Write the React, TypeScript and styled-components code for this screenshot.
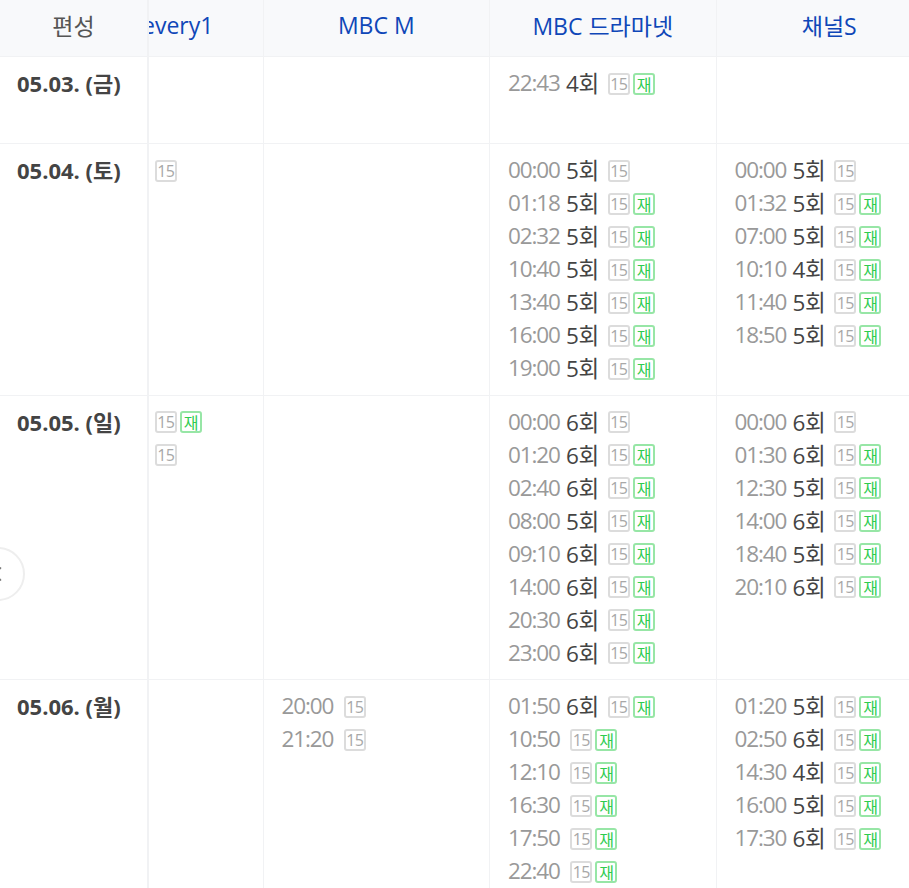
import React, { useLayoutEffect, useRef } from 'react';
import styled, { createGlobalStyle } from 'styled-components';

type Entry = { time: string; ep?: string; re?: boolean };
type Row = { date: string; cells: Entry[][] };

const channels = ['MBC every1', 'MBC M', 'MBC 드라마넷', '채널S'];

const e = (time: string, ep?: string, re = true): Entry => ({ time, ep, re });

const rows: Row[] = [
  {
    date: '05.03. (금)',
    cells: [[], [], [e('22:43', '4회')], []],
  },
  {
    date: '05.04. (토)',
    cells: [
      [e('23:50', '5회', false)],
      [],
      [
        e('00:00', '5회', false),
        e('01:18', '5회'),
        e('02:32', '5회'),
        e('10:40', '5회'),
        e('13:40', '5회'),
        e('16:00', '5회'),
        e('19:00', '5회'),
      ],
      [
        e('00:00', '5회', false),
        e('01:32', '5회'),
        e('07:00', '5회'),
        e('10:10', '4회'),
        e('11:40', '5회'),
        e('18:50', '5회'),
      ],
    ],
  },
  {
    date: '05.05. (일)',
    cells: [
      [e('16:20', '5회'), e('23:50', '6회', false)],
      [],
      [
        e('00:00', '6회', false),
        e('01:20', '6회'),
        e('02:40', '6회'),
        e('08:00', '5회'),
        e('09:10', '6회'),
        e('14:00', '6회'),
        e('20:30', '6회'),
        e('23:00', '6회'),
      ],
      [
        e('00:00', '6회', false),
        e('01:30', '6회'),
        e('12:30', '5회'),
        e('14:00', '6회'),
        e('18:40', '5회'),
        e('20:10', '6회'),
      ],
    ],
  },
  {
    date: '05.06. (월)',
    cells: [
      [],
      [e('20:00', undefined, false), e('21:20', undefined, false)],
      [
        e('01:50', '6회'),
        e('10:50'),
        e('12:10'),
        e('16:30'),
        e('17:50'),
        e('22:40'),
      ],
      [
        e('01:20', '5회'),
        e('02:50', '6회'),
        e('14:30', '4회'),
        e('16:00', '5회'),
        e('17:30', '6회'),
      ],
    ],
  },
];

const App = () => {
  const scrollRef = useRef<HTMLDivElement>(null);

  // 채널 목록은 가로 스크롤된 상태로 보여준다
  useLayoutEffect(() => {
    if (scrollRef.current) scrollRef.current.scrollLeft = 112;
  }, []);

  return (
    <>
      <GlobalStyle />
      <StyledPage>
        <StyledScroller ref={scrollRef}>
          <StyledHeaderRow>
            <StyledHeaderFirst>편성</StyledHeaderFirst>
            {channels.map((name) => (
              <StyledHeaderCell key={name}>{name}</StyledHeaderCell>
            ))}
          </StyledHeaderRow>
          {rows.map((row) => (
            <StyledRow key={row.date}>
              <StyledDate>{row.date}</StyledDate>
              {row.cells.map((entries, i) => (
                <StyledCell key={i}>
                  {entries.map((entry, j) => (
                    <StyledLine key={j}>
                      <StyledTime>{entry.time}</StyledTime>
                      {entry.ep && <StyledEpisode>{entry.ep}</StyledEpisode>}
                      <StyledBadges>
                        <StyledAge>15</StyledAge>
                        {entry.re && <StyledRerun>재</StyledRerun>}
                      </StyledBadges>
                    </StyledLine>
                  ))}
                </StyledCell>
              ))}
            </StyledRow>
          ))}
        </StyledScroller>
        <StyledPrev aria-label="이전">
          <svg width="12" height="20" viewBox="0 0 12 20" fill="none">
            <path d="M9 3.5 2.5 10 9 16.5" stroke="#777" strokeWidth="1.6" />
          </svg>
        </StyledPrev>
      </StyledPage>
    </>
  );
};

export default App;

const GlobalStyle = createGlobalStyle`
  html, body {
    margin: 0;
    padding: 0;
    height: 100%;
    overflow: hidden;
    background: #fff;
  }
  body {
    font-family: "Open Sans", "Noto Sans CJK KR", sans-serif;
  }
`;

const StyledPage = styled.div`
  position: relative;
  width: 909px;
  height: 888px;
  overflow: hidden;
`;

const StyledScroller = styled.div`
  width: 100%;
  height: 100%;
  overflow: hidden;
`;

const StyledHeaderRow = styled.div`
  display: grid;
  grid-template-columns: 149px repeat(4, 226.5px);
  width: 1055px;
  height: 57px;
  background: #f8f9fb;
  border-bottom: 1px solid #f1f2f4;
  box-sizing: border-box;
`;

const StyledHeaderCell = styled.div`
  display: flex;
  align-items: center;
  justify-content: center;
  padding-bottom: 7px;
  border-right: 1px solid #f1f2f4;
  font-size: 23px;
  color: #0f47b8;
  white-space: nowrap;
`;

const StyledHeaderFirst = styled(StyledHeaderCell)`
  position: sticky;
  left: 0;
  z-index: 2;
  background: #f8f9fb;
  color: #555;
  border-right-width: 2px;
  border-top-left-radius: 12px;
`;

const StyledRow = styled.div`
  display: grid;
  grid-template-columns: 149px repeat(4, 226.5px);
  width: 1055px;
  min-height: 87px;
  border-bottom: 1px solid #f1f2f4;
  box-sizing: border-box;
`;

const StyledDate = styled.div`
  position: sticky;
  left: 0;
  z-index: 2;
  padding: 10px 0 0 17px;
  background: #fff;
  border-right: 2px solid #f1f2f4;
  font-size: 22px;
  font-weight: 700;
  line-height: 33px;
  color: #444;
  white-space: nowrap;
`;

const StyledCell = styled.div`
  padding: 10px 0 9.5px 18px;
  border-right: 1px solid #f1f2f4;
`;

const StyledLine = styled.div`
  display: flex;
  align-items: center;
  height: 33px;
  font-size: 22.5px;
  white-space: nowrap;
`;

const StyledTime = styled.span`
  position: relative;
  top: -1px;
  letter-spacing: -1.1px;
  color: #999;
`;

const StyledEpisode = styled.span`
  position: relative;
  top: -1px;
  margin: 0 -1.5px 0 6px;
  letter-spacing: -0.3px;
  color: #444;
`;

const StyledBadges = styled.span`
  display: inline-flex;
  gap: 3px;
  margin-left: 10.5px;
`;

const StyledAge = styled.span`
  display: inline-flex;
  align-items: center;
  justify-content: center;
  box-sizing: border-box;
  width: 22px;
  height: 22px;
  border: 2px solid #dcdcdc;
  border-radius: 3px;
  font-size: 16px;
  letter-spacing: -0.6px;
  color: #a8a8a8;
`;

const StyledRerun = styled(StyledAge)`
  border-color: #97e6a6;
  color: #2ecc4f;
`;

const StyledPrev = styled.button`
  position: absolute;
  left: -29px;
  top: 547px;
  z-index: 3;
  display: flex;
  align-items: center;
  justify-content: center;
  width: 54px;
  height: 54px;
  padding: 0;
  background: #fff;
  border: 2px solid #eeeeee;
  border-radius: 50%;
`;
